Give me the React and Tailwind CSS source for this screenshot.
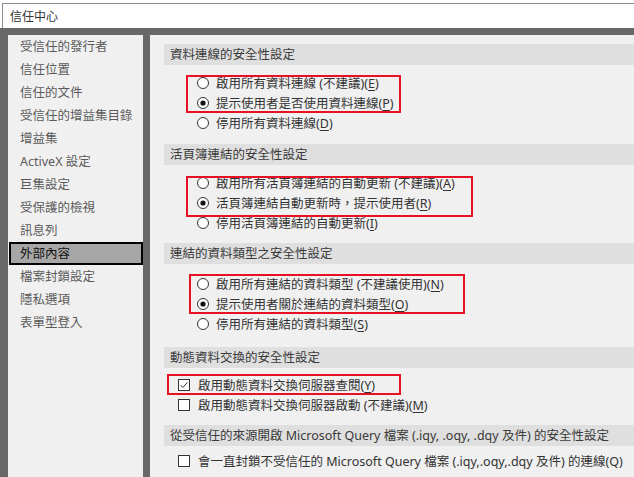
import React from 'react';

const navItems = [
  '受信任的發行者',
  '信任位置',
  '信任的文件',
  '受信任的增益集目錄',
  '增益集',
  'ActiveX 設定',
  '巨集設定',
  '受保護的檢視',
  '訊息列',
  '外部內容',
  '檔案封鎖設定',
  '隱私選項',
  '表單型登入',
];

function Radio({ checked }) {
  return (
    <svg width="12" height="12" viewBox="0 0 12 12" className="shrink-0">
      <circle cx="6" cy="6" r="5.5" fill="#fff" stroke="#333" strokeWidth="1" />
      {checked && <circle cx="6" cy="6" r="2.6" fill="#111" />}
    </svg>
  );
}

function Check({ checked }) {
  return (
    <svg width="12" height="12" viewBox="0 0 12 12" className="shrink-0">
      <rect x="0.5" y="0.5" width="11" height="11" fill="#fff" stroke="#333" strokeWidth="1" />
      {checked && <path d="M2.6 6.2 L4.9 8.5 L9.4 3.4" fill="none" stroke="#333" strokeWidth="1" />}
    </svg>
  );
}

function Key({ children }) {
  return <span className="underline underline-offset-2">{children}</span>;
}

function RadioRow({ checked, children }) {
  return (
    <div className="h-[20px] flex items-center pl-[33px]">
      <Radio checked={checked} />
      <span className="ml-[7px] mt-[2px] text-[#333] whitespace-nowrap">{children}</span>
    </div>
  );
}

function CheckRow({ checked, children }) {
  return (
    <div className="h-[20px] flex items-center pl-[14px]">
      <Check checked={checked} />
      <span className="ml-[8px] mt-[2px] text-[#333] whitespace-nowrap">{children}</span>
    </div>
  );
}

function Header({ className, children }) {
  return (
    <div className={`h-[21px] bg-[#dfdfdf] pl-[6px] flex items-center text-[#3a3a3a] whitespace-nowrap ${className}`}>
      <span className="mt-[2px]">{children}</span>
    </div>
  );
}

export default function App() {
  return (
    <div
      className="w-[634px] h-[477px] overflow-hidden bg-white flex flex-col text-[12.5px] leading-none"
      style={{ fontFamily: '"Noto Sans", "Noto Sans CJK TC", sans-serif' }}
    >
      {/* Title bar */}
      <div className="h-[28px] pt-[3px] pl-[2px] bg-white">
        <div className="h-full border-l border-t border-[#8c8c8c] flex items-center pl-[7px] text-[#333] text-[12px]">
          <span className="mt-[2px]">信任中心</span>
        </div>
      </div>

      {/* Body */}
      <div className="flex-1 flex bg-[#686868] pt-[7px] pl-[8px] gap-[7px]">
        {/* Left nav */}
        <div className="w-[135px] bg-[#f0f0f0] flex flex-col">
          {navItems.map((item) =>
            item === '外部內容' ? (
              <div
                key={item}
                className="h-[23px] ml-[1px] pl-[9px] flex items-center bg-[#a6a6a6] border-2 border-black text-[#111]"
              >
                <span className="mt-[2px]">{item}</span>
              </div>
            ) : (
              <div key={item} className="h-[23px] pl-[12px] flex items-center text-[#5a5a5a]">
                <span className="mt-[2px]">{item}</span>
              </div>
            )
          )}
        </div>

        {/* Right content */}
        <div className="flex-1 bg-[#f0f0f0] pl-[14px] flex flex-col">
          <Header className="mt-[9px]">資料連線的安全性設定</Header>
          <div className="relative mt-[8px]">
            <RadioRow>啟用所有資料連線 (不建議)(<Key>E</Key>)</RadioRow>
            <RadioRow checked>提示使用者是否使用資料連線(<Key>P</Key>)</RadioRow>
            <RadioRow>停用所有資料連線(<Key>D</Key>)</RadioRow>
            <div className="absolute left-[22px] top-[2px] w-[215px] h-[38px] border-2 border-[#e81123]" />
          </div>

          <Header className="mt-[11px]">活頁簿連結的安全性設定</Header>
          <div className="relative mt-[8px]">
            <RadioRow>啟用所有活頁簿連結的自動更新 (不建議)(<Key>A</Key>)</RadioRow>
            <RadioRow checked>活頁簿連結自動更新時，提示使用者(<Key>R</Key>)</RadioRow>
            <RadioRow>停用活頁簿連結的自動更新(<Key>I</Key>)</RadioRow>
            <div className="absolute left-[22px] top-[3px] w-[287px] h-[41px] border-2 border-[#e81123]" />
          </div>

          <Header className="mt-[10px]">連結的資料類型之安全性設定</Header>
          <div className="relative mt-[10px]">
            <RadioRow>啟用所有連結的資料類型 (不建議使用)(<Key>N</Key>)</RadioRow>
            <RadioRow checked>提示使用者關於連結的資料類型(<Key>O</Key>)</RadioRow>
            <RadioRow>停用所有連結的資料類型(<Key>S</Key>)</RadioRow>
            <div className="absolute left-[25px] top-0 w-[276px] h-[40px] border-2 border-[#e81123]" />
          </div>

          <Header className="mt-[13px] h-[20px]">動態資料交換的安全性設定</Header>
          <div className="relative mt-[7px]">
            <CheckRow checked>啟用動態資料交換伺服器查閱(<Key>Y</Key>)</CheckRow>
            <CheckRow>啟用動態資料交換伺服器啟動 (不建議)(<Key>M</Key>)</CheckRow>
            <div className="absolute left-[3px] -top-[1px] w-[234px] h-[21px] border-2 border-[#e81123]" />
          </div>

          <Header className="mt-[10px]">
            從受信任的來源開啟 Microsoft Query 檔案 (.iqy, .oqy, .dqy 及件) 的安全性設定
          </Header>
          <div className="mt-[5px]">
            <CheckRow>會一直封鎖不受信任的 Microsoft Query 檔案 (.iqy,.oqy,.dqy 及件) 的連線(Q)</CheckRow>
          </div>
        </div>
      </div>
    </div>
  );
}
